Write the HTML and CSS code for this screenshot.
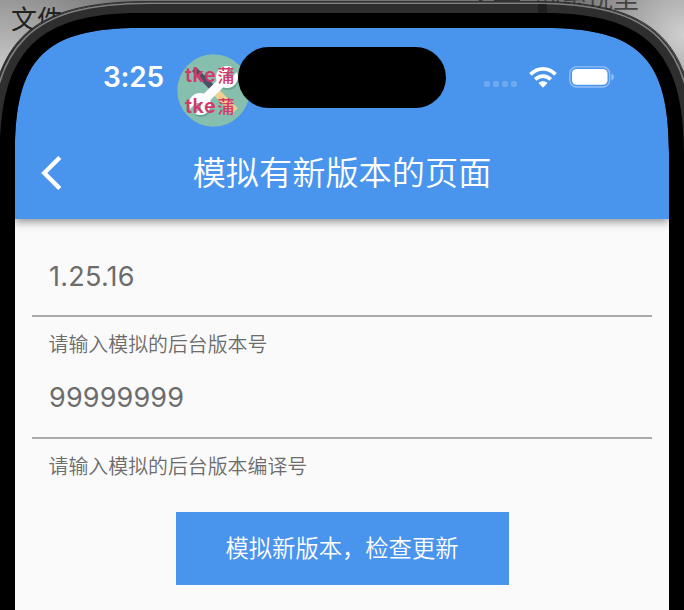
FILE: index.html
```html
<!DOCTYPE html>
<html lang="zh-CN">
<head>
<meta charset="utf-8">
<title>模拟有新版本的页面</title>
<link rel="stylesheet" href="styles.css">
</head>
<body>
<div class="desktop">
  <span class="desk-label desk-left">文件</span>
  <span class="desk-label desk-right">的系悦里</span>
  <main class="screen">
    <header class="app-header">
      <div class="status-bar">
        <span class="time">3:25</span>
        <div class="status-icons">
          <svg class="signal" width="34" height="6" viewBox="0 0 34 6"><g fill="#fff" opacity=".2"><rect x="0" width="6" height="6" rx="2"/><rect x="9" width="6" height="6" rx="2"/><rect x="18" width="6" height="6" rx="2"/><rect x="27" width="6" height="6" rx="2"/></g></svg>
          <svg class="wifi" width="28" height="21" viewBox="0 0 28 21"><g fill="none" stroke="#fff" stroke-width="3.7"><path d="M1.5 7.4C8.7.1 19.3.1 26.5 7.4"/><path d="M6.2 12.4C10.7 8 17.3 8 21.8 12.4"/></g><path fill="#fff" d="M9.5 16.1C12 13.7 16 13.7 18.5 16.1L14 20.7Z"/></svg>
          <svg class="battery" width="46" height="22" viewBox="0 0 46 22"><rect x=".8" y=".8" width="39.8" height="20.2" rx="6.8" fill="none" stroke="#fff" stroke-width="1.3" opacity=".42"/><rect x="3" y="3" width="35.5" height="15.8" rx="4.6" fill="#fff"/><path d="M42.5 7.5C45.5 9 45.5 13 42.5 14.5Z" fill="#fff" opacity=".45"/></svg>
        </div>
      </div>
      <div class="title-bar">
        <svg class="back" width="22" height="34" viewBox="0 0 22 34"><path d="M18.8 1.5 3.3 17 18.8 32.5" fill="none" stroke="#fff" stroke-width="4.4"/></svg>
        <h1>模拟有新版本的页面</h1>
      </div>
    </header>
    <form class="form">
      <div class="field"><div class="value">1.25.16</div><div class="hint">请输入模拟的后台版本号</div></div>
      <div class="field"><div class="value wide">99999999</div><div class="hint">请输入模拟的后台版本编译号</div></div>
      <button type="button">模拟新版本，检查更新</button>
    </form>
  </main>
  <div class="badge">
    <svg width="73" height="73" viewBox="0 0 73 73">
      <circle cx="36.5" cy="36.5" r="36.2" fill="#87bfaf"/>
      <path d="M15 17 19 13 41 35 37 40Z" fill="#4b5069"/>
      <path d="M39 38 58 57" stroke="#efd08f" stroke-width="8"/>
      <g fill="#6ba596" transform="translate(1 2)"><circle cx="23" cy="50" r="11"/><circle cx="50" cy="23" r="11"/></g>
      <path d="M23 50 50 23" stroke="#fff" stroke-width="9"/>
      <circle cx="23" cy="50" r="11" fill="#fff"/>
      <circle cx="50" cy="23" r="11" fill="#fff"/>
      <path d="M11 57 19 49 24 49 24 54 16 62Z" fill="#87bfaf"/>
      <path d="M62 16 54 24 49 24 49 19 57 11Z" fill="#87bfaf"/>
    </svg>
    <div class="badge-text"><div>tke<b>蒲</b></div><div>tke<b>蒲</b></div></div>
  </div>
  <svg class="bezel" width="684" height="610" viewBox="0 0 684 610">
    <path fill="#2e2e2e" fill-rule="evenodd" d="M-12 620V162C-12 42 28 2 148 2H536C656 2 696 42 696 162V620ZM15 620H669V153C669 58 639 28 544 28H140C45 28 15 58 15 153Z"/>
    <path fill="#000" fill-rule="evenodd" d="M0 620V153C0 51 38 13 140 13H544C646 13 684 51 684 153V620ZM15 620H669V153C669 58 639 28 544 28H140C45 28 15 58 15 153Z"/>
    <path fill="none" stroke="#808080" stroke-width="1.6" d="M-10 163C-10 43 30 3.2 150 3.2H534C654 3.2 694 43 694 163"/>
    <path fill="none" stroke="#222" stroke-width=".9" d="M-12 161C-12 41 28 1.6 148 1.6H536C656 1.6 696 41 696 161"/>
    <path fill="#202020" d="M538 4h9v9h-9z"/>
    <path fill="#333" d="M494 0h26v2h-26zM479 0h4l-2 2h-3z"/>
    <rect x="238" y="47" width="208" height="61" rx="30.5"/>
  </svg>
</div>
</body>
</html>
```
FILE: styles.css
```css
* { box-sizing: border-box; }
body { margin: 0; font-family: Inter, "Noto Sans CJK SC", sans-serif; }
.desktop {
  position: relative;
  width: 684px;
  height: 610px;
  padding: 28px 15px 0;
  overflow: hidden;
  background:
    radial-gradient(ellipse 150px 110px at 0 65px, #c6c6c6, rgba(150,150,150,0)),
    radial-gradient(ellipse 110px 110px at 684px 35px, #d0d0d0, rgba(150,150,150,0)),
    #777;
}
.desk-label { position: absolute; font-size: 26px; line-height: 30px; white-space: nowrap; }
.desk-left { left: 11px; top: 5px; color: #222; }
.desk-right { left: 535px; top: -16px; color: #444; }
.screen {
  display: flex;
  flex-direction: column;
  height: 582px;
  background: #fafafa;
  border-radius: 88px 88px 0 0;
}
.app-header {
  height: 191px;
  background: #4994ec;
  border-radius: 88px 88px 0 0;
  box-shadow: 0 3px 8px rgba(0,0,0,.42);
  color: #fff;
}
.status-bar {
  display: flex;
  justify-content: space-between;
  align-items: center;
  height: 98px;
  padding: 0 54px 0 88px;
}
.time { font-size: 28px; font-weight: 600; line-height: 34px; letter-spacing: -.2px; }
.status-icons { display: flex; align-items: center; }
.signal { margin: 14px 11px 0 0; }
.wifi { margin-right: 12px; }
.title-bar {
  display: grid;
  grid-template-columns: 22px 1fr 22px;
  align-items: center;
  height: 93px;
  padding: 0 26px;
}
.title-bar h1 { margin: 0; padding-top: 1px; text-align: center; font-size: 33.2px; font-weight: 350; line-height: 40px; }
.form { display: flex; flex-direction: column; padding: 16px 17px 0; }
.field { height: 121.5px; color: #6c6c6c; }
.value {
  height: 82px;
  padding: 24px 17px 0;
  border-bottom: 2px solid #aaa;
  font-size: 27px;
  line-height: 36px;
  letter-spacing: .25px;
}
.value.wide { padding-top: 23.5px; letter-spacing: .15px; }
.hint { padding: 13px 16.6px 0; font-size: 19.9px; font-weight: 350; line-height: 30px; }
.form button {
  align-self: center;
  width: 333px;
  height: 73px;
  margin-top: 34px;
  padding-top: 2px;
  border: 0;
  background: #4994ec;
  color: #fff;
  font: 350 23.3px/34px Inter, "Noto Sans CJK SC", sans-serif;
}
.bezel { position: absolute; left: 0; top: 0; }
.badge { position: absolute; left: 177px; top: 54px; width: 73px; height: 73px; }
.badge svg { display: block; }
.badge-text { position: absolute; left: 8px; top: 6px; color: #d3396a; font-size: 20px; font-weight: 600; line-height: 30px; letter-spacing: .5px; white-space: nowrap; }
.badge-text b { margin-left: 1px; font-size: 17px; font-weight: 500; }
```
